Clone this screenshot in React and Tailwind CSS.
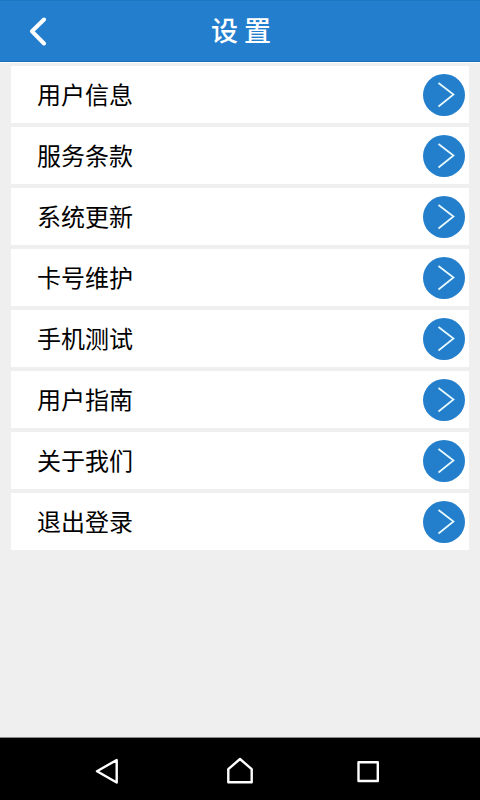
const menuItems = [
  { label: '用户信息', href: '#profile' },
  { label: '服务条款', href: '#terms' },
  { label: '系统更新', href: '#update' },
  { label: '卡号维护', href: '#cards' },
  { label: '手机测试', href: '#phone-test' },
  { label: '用户指南', href: '#guide' },
  { label: '关于我们', href: '#about' },
  { label: '退出登录', href: '#logout' },
];

const Header = () => (
  <header className="grid h-[62px] grid-cols-[76px_1fr_76px] items-center border-t border-b border-t-[#1f76c0] border-b-[#1b6cb5] bg-[#237fce] text-white">
    <button type="button" aria-label="返回" className="flex h-full items-center pl-7">
      <svg width="20" height="30" viewBox="0 0 20 30" fill="none" stroke="currentColor" strokeWidth="4" strokeLinecap="round" strokeLinejoin="round">
        <path d="M16 3.5 L4 15.3 L16 27.5" />
      </svg>
    </button>
    <h1 className="pb-0.5 pl-0.5 text-center text-[27px] leading-9 font-medium">设 置</h1>
  </header>
);

const ArrowBadge = () => (
  <svg width="42" height="42" viewBox="0 0 42 42" fill="none" aria-hidden="true">
    <circle cx="21" cy="21" r="21" fill="#237fcb" />
    <path d="M15.5 9 L30.5 20.5 L15.5 32.5" stroke="#e9fbff" strokeWidth="1.7" />
  </svg>
);

const MenuRow = ({ label, href }) => (
  <li>
    <a href={href} className="flex h-[57px] items-center justify-between bg-white pr-1 pl-[26px] text-black">
      <span className="pb-0.5 text-2xl">{label}</span>
      <ArrowBadge />
    </a>
  </li>
);

const NavBar = () => (
  <nav className="grid h-[63px] grid-cols-[1fr_28px_1fr] items-center border-t border-[#8a8a8a] bg-black pt-1 text-white">
    <button type="button" aria-label="后退" className="flex pl-[94px]">
      <svg width="26" height="28" viewBox="0 0 26 28" fill="none" stroke="currentColor" strokeWidth="2.4" strokeLinejoin="round">
        <path d="M22.7 3 V25.5 L3 14.2 Z" />
      </svg>
    </button>
    <button type="button" aria-label="主页" className="flex">
      <svg width="28" height="28" viewBox="0 0 28 28" fill="none" stroke="currentColor" strokeWidth="2.4" strokeLinejoin="round">
        <path d="M2.3 12.2 L14 2 L25.7 12.2 V25.3 H2.3 Z" />
      </svg>
    </button>
    <button type="button" aria-label="最近任务" className="flex justify-end pr-[99px]">
      <svg width="26" height="28" viewBox="0 0 26 28" fill="none" stroke="currentColor" strokeWidth="2.4" strokeLinejoin="round">
        <rect x="3.5" y="5.2" width="19.3" height="18.8" />
      </svg>
    </button>
  </nav>
);

export default function App() {
  return (
    <div className="flex min-h-screen flex-col bg-[#efefef] font-['Noto_Sans_CJK_SC',sans-serif]">
      <Header />
      <main className="flex-1 border-t border-white px-[11px] pt-[3px]">
        <ul className="flex flex-col gap-1">
          {menuItems.map((item) => (
            <MenuRow key={item.href} label={item.label} href={item.href} />
          ))}
        </ul>
      </main>
      <NavBar />
    </div>
  );
}
